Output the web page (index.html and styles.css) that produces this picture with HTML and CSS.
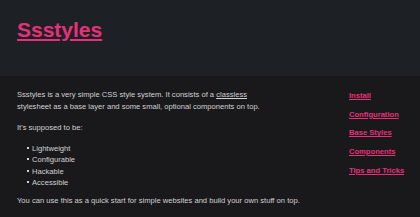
FILE: index.html
```html
<!DOCTYPE html>
<html lang="en">
<head>
  <meta charset="UTF-8">
  <meta name="viewport" content="width=device-width, initial-scale=1.0">
  <title>Ssstyles</title>
  <link rel="stylesheet" href="styles.css">
</head>
<body>
  <header class="site-header">
    <h1><a href="#">Ssstyles</a></h1>
  </header>

  <div class="layout">
    <main class="content">
      <p class="intro">Ssstyles is a very simple CSS style system. It consists of a <a class="plain" href="#">classless</a> stylesheet as a base layer and some small, optional components on top.</p>
      <p>It's supposed to be:</p>
      <ul>
        <li>Lightweight</li>
        <li>Configurable</li>
        <li>Hackable</li>
        <li>Accessible</li>
      </ul>
      <p>You can use this as a quick start for simple websites and build your own stuff on top.</p>
    </main>

    <nav class="toc">
      <a href="#">Install</a>
      <a href="#">Configuration</a>
      <a href="#">Base Styles</a>
      <a href="#">Components</a>
      <a href="#">Tips and Tricks</a>
    </nav>
  </div>
</body>
</html>
```

FILE: styles.css
```css
body {
  margin: 0;
  background: #19191b;
  color: #d2d2d2;
  font-family: "Liberation Sans", Arial, sans-serif;
  font-size: 7.6px;
  line-height: 11.5px;
}
a {
  color: #e5317a;
  font-weight: bold;
}
a.plain {
  color: inherit;
  font-weight: normal;
}
.site-header {
  background: #1d2125;
  height: 76px;
  padding: 0 17px;
  box-sizing: border-box;
  overflow: hidden;
}
.site-header h1 {
  margin: 0;
  padding-top: 17px;
  font-size: 21px;
  line-height: 25px;
}
.layout {
  display: flex;
  padding: 13px 17px 0 17px;
}
.content {
  width: 300px;
  flex: none;
}
.content p {
  margin: 0 0 9.5px 0;
}
.content .intro {
  max-width: 262px;
}
.content ul {
  margin: 0 0 6px 0;
  padding-left: 10px;
  list-style: none;
}
.content li::before {
  content: "";
  display: inline-block;
  width: 2px;
  height: 2px;
  background: #d2d2d2;
  margin-right: 3px;
  vertical-align: 2px;
}
.toc {
  display: flex;
  flex-direction: column;
  gap: 7.2px;
  margin-left: 32px;
  padding-top: 1px;
  white-space: nowrap;
}
```
